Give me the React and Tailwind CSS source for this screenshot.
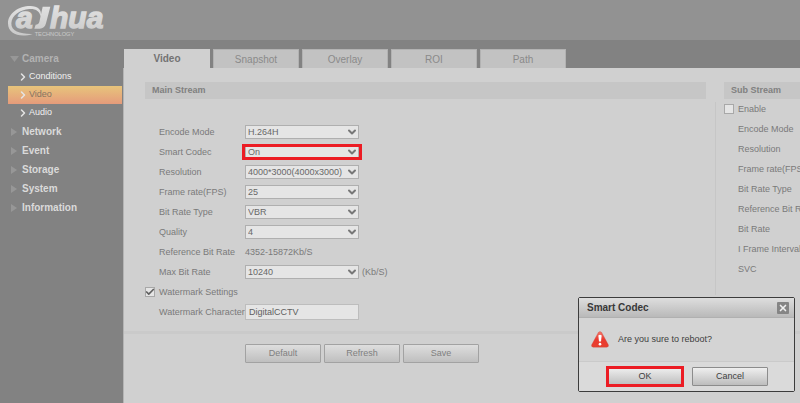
import React, { useState } from 'react';
import { Check, ChevronDown, ChevronRight, X } from 'lucide-react';

const menu = [
  { name: 'Camera', open: true, children: ['Conditions', 'Video', 'Audio'] },
  { name: 'Network' },
  { name: 'Event' },
  { name: 'Storage' },
  { name: 'System' },
  { name: 'Information' },
];

const tabs = ['Video', 'Snapshot', 'Overlay', 'ROI', 'Path'];

const mainFields = [
  { id: 'encode', label: 'Encode Mode', options: ['H.264H', 'H.264', 'H.265'] },
  { id: 'codec', label: 'Smart Codec', options: ['On', 'Off'], marked: true },
  { id: 'resolution', label: 'Resolution', options: ['4000*3000(4000x3000)'] },
  { id: 'fps', label: 'Frame rate(FPS)', options: ['25', '20', '15'] },
  { id: 'bitrate-type', label: 'Bit Rate Type', options: ['VBR', 'CBR'] },
  { id: 'quality', label: 'Quality', options: ['4', '5', '6'] },
  { id: 'reference', label: 'Reference Bit Rate', text: '4352-15872Kb/S' },
  { id: 'max', label: 'Max Bit Rate', options: ['10240', '8192'], unit: '(Kb/S)' },
];

const subFields = [
  'Encode Mode',
  'Resolution',
  'Frame rate(FPS)',
  'Bit Rate Type',
  'Reference Bit Rate',
  'Bit Rate',
  'I Frame Interval',
  'SVC',
];

const Logo = () => (
  <svg viewBox="0 0 330 120" className="h-10 w-[110px]" role="img" aria-label="alhua technology">
    <defs>
      <linearGradient id="silver" x1="0" y1="15" x2="0" y2="110" gradientUnits="userSpaceOnUse">
        <stop offset="0" stopColor="#e2e2e2" />
        <stop offset="1" stopColor="#c8c8c8" />
      </linearGradient>
    </defs>
    <g fill="url(#silver)" fontFamily="Liberation Sans, Arial, sans-serif">
      {/* ring round the first letter */}
      <path d="M98 102 C62 114 24 104 24 70 C24 40 56 18 91 18 C113 18 127 29 122 50 C119 34 108 26 88 27 C60 29 35 46 34 70 C33 94 62 103 98 102 Z" />
      {/* tall stroke that hooks under the ring */}
      <path d="M128 20 H151 L138 70 C135 81 129 86 119 86 H103 L107 74 C113 74 116 72 118 66 Z" />
      <g fontSize="90" fontWeight="700" fontStyle="italic" stroke="url(#silver)" strokeWidth="4">
        <text x="48" y="84">a</text>
        <text x="150" y="84">hua</text>
      </g>
      <text x="104" y="107" fontSize="17">TECHNOLOGY</text>
    </g>
  </svg>
);

const SelectBox = ({ id, options, marked }) => (
  <span className="relative block w-[114px]">
    <select
      id={id}
      className="block h-[14px] w-full appearance-none border border-[#afafaf] bg-[#e5e5e5] pl-[2px] text-[9px] leading-[12px] text-[#686868]"
    >
      {options.map((option) => (
        <option key={option}>{option}</option>
      ))}
    </select>
    <ChevronDown className="pointer-events-none absolute top-px right-px h-3 w-3 text-[#777]" strokeWidth={4} />
    {marked && <span className="pointer-events-none absolute -inset-x-[3px] -inset-y-px border-[3px] border-[#ec1c24]" />}
  </span>
);

const CheckBox = ({ id, defaultChecked }) => (
  <span className="relative block h-[10px] w-[10px] shrink-0">
    <input
      id={id}
      type="checkbox"
      defaultChecked={defaultChecked}
      className="peer block h-full w-full appearance-none border border-[#a8a8a8] bg-[#e5e5e5]"
    />
    <Check className="pointer-events-none absolute inset-0 hidden h-[10px] w-[10px] text-[#606060] peer-checked:block" strokeWidth={4} />
  </span>
);

const SectionTitle = ({ children }) => (
  <h2 className="h-[17px] bg-[#c6c6c6] pl-[7px] text-[9px] leading-[17px] font-bold whitespace-nowrap text-[#808080]">
    {children}
  </h2>
);

const Sidebar = () => (
  <nav className="w-[123px] shrink-0 pt-[9px] pr-px pl-2">
    {menu.map((item) => (
      <div key={item.name}>
        <a href="#" className={`flex h-[19px] items-center pl-[2px] text-[10px] font-bold ${item.open ? 'text-[#b2b2b2]' : 'text-[#dadada]'}`}>
          <svg viewBox="0 0 12 12" className="h-3 w-3 text-[#979797]" fill="currentColor">
            {item.open ? <path d="M0 3 H9 L4.500 9 Z" /> : <path d="M1 2 L7 6 L1 10 Z" />}
          </svg>
          {item.name}
        </a>
        {item.children?.map((child) => (
          <a
            key={child}
            href="#"
            className={`flex h-[18px] items-center pl-[9px] text-[9px] ${
              child === 'Video' ? 'bg-linear-to-b from-[#e7c47b] to-[#e59b7b] text-[#857462]' : 'text-[#f0f0f0]'
            }`}
          >
            <ChevronRight className="h-3 w-3 text-[#e4e4e4]" strokeWidth={3} />
            {child}
          </a>
        ))}
      </div>
    ))}
  </nav>
);

const RebootDialog = ({ onClose }) => (
  <div
    role="dialog"
    aria-labelledby="dialog-title"
    className="absolute right-[5px] bottom-[11px] w-[217px] rounded-[2px] border border-[#3c3c3c] bg-[#d4d4d4] text-[9px] text-[#404040]"
  >
    <div className="flex h-[20px] items-center justify-between border-b border-[#b0b0b0] bg-linear-to-b from-[#dedede] to-[#b9b9b9] pr-[5px] pl-2">
      <h3 id="dialog-title" className="text-[10px] font-bold text-[#383838]">Smart Codec</h3>
      <button type="button" aria-label="Close" onClick={onClose} className="flex h-3 w-3 items-center justify-center rounded-[1px] bg-[#858585] text-[#f0f0f0]">
        <X className="h-[10px] w-[10px]" strokeWidth={4} />
      </button>
    </div>
    <div className="flex h-[43px] items-center gap-[9px] pl-3">
      <svg viewBox="0 0 54 50" className="h-[17px] w-[18px]">
        <defs>
          <linearGradient id="alert" x1="0" y1="0" x2="0" y2="1">
            <stop offset="0" stopColor="#f47a6c" />
            <stop offset="0.500" stopColor="#ea3a30" />
            <stop offset="1" stopColor="#e8402f" />
          </linearGradient>
        </defs>
        <path d="M22 4 Q27 -2 32 4 L52 41 Q54 48 47 48 H7 Q0 48 2 41 Z" fill="url(#alert)" stroke="#c9453c" />
        <path d="M22 13 Q27 9 32 13 L30 31 H24 Z" fill="#fff" />
        <circle cx="27" cy="39" r="4" fill="#fff" />
      </svg>
      <p>Are you sure to reboot?</p>
    </div>
    <div className="flex h-[30px] items-center justify-end gap-[9px] border-t border-[#cacaca] bg-[#dadada] pr-[26px]">
      <span className="relative">
        <button type="button" onClick={onClose} className="block h-[19px] w-[76px] rounded-[1px] border border-[#8c8c8c] bg-linear-to-b from-[#efefef] to-[#bdbdbd]">
          OK
        </button>
        <span className="pointer-events-none absolute -inset-px border-[3px] border-[#ec1c24]" />
      </span>
      <button type="button" onClick={onClose} className="h-[19px] w-[76px] rounded-[1px] border border-[#8c8c8c] bg-linear-to-b from-[#efefef] to-[#bdbdbd]">
        Cancel
      </button>
    </div>
  </div>
);

const App = () => {
  const [activeTab, setActiveTab] = useState('Video');
  const [showDialog, setShowDialog] = useState(true);

  return (
    <div className="relative flex min-h-screen flex-col overflow-hidden bg-[#828282] font-['Liberation_Sans',Arial,sans-serif]">
      <header className="h-10 bg-[#929292]">
        <Logo />
      </header>

      <div className="flex flex-1">
        <Sidebar />

        <main className="flex min-w-0 flex-1 flex-col pt-[9px]">
          <div role="tablist" className="flex gap-[3px] pl-px">
            {tabs.map((tab) => (
              <button
                key={tab}
                type="button"
                role="tab"
                aria-selected={tab === activeTab}
                onClick={() => setActiveTab(tab)}
                className={`h-[19px] w-[86px] text-[10px] ${
                  tab === activeTab ? 'bg-[#d0d0d0] font-bold text-[#737373]' : 'border border-b-0 border-[#b2b2b2] bg-[#c2c2c2] text-[#8a8a8a]'
                }`}
              >
                {tab}
              </button>
            ))}
          </div>

          <div className="flex-1 border-l border-[#b4b4b4] bg-[#d0d0d0] pt-[14px] text-[9px] text-[#7a7a7a]">
            <div className="flex pl-[21px]">
              <section className="min-w-0 flex-1">
                <SectionTitle>Main Stream</SectionTitle>
                <div className="pt-[23px] pb-[9px]">
                  {mainFields.map((field) => (
                    <div key={field.id} className="flex h-5 items-center pl-[14px]">
                      <label htmlFor={field.options && field.id} className="w-[86px] pt-[2px] whitespace-nowrap">{field.label}</label>
                      {field.options ? <SelectBox {...field} /> : <span className="pt-[2px]">{field.text}</span>}
                      {field.unit && <span className="pt-[2px] pl-[3px]">{field.unit}</span>}
                    </div>
                  ))}
                  <div className="flex h-5 items-center gap-1">
                    <CheckBox id="watermark" defaultChecked />
                    <label htmlFor="watermark" className="pt-[2px]">Watermark Settings</label>
                  </div>
                  <div className="flex h-5 items-center pl-[14px]">
                    <label htmlFor="character" className="w-[86px] pt-[2px] whitespace-nowrap">Watermark Character</label>
                    <input
                      id="character"
                      type="text"
                      defaultValue="DigitalCCTV"
                      className="h-4 w-[114px] border border-[#bdbdbd] bg-[#e5e5e5] px-[3px] text-[9px] text-[#606060]"
                    />
                  </div>
                </div>
              </section>

              <div className="flex w-[18px] shrink-0 justify-center pt-5 pb-9">
                <div className="w-px bg-[#c6c6c6]" />
              </div>

              <section className="w-[76px] shrink-0 overflow-hidden">
                <SectionTitle>Sub Stream</SectionTitle>
                <div className="flex h-5 items-center gap-1">
                  <CheckBox id="sub-enable" />
                  <label htmlFor="sub-enable" className="pt-[2px]">Enable</label>
                </div>
                {subFields.map((field) => (
                  <p key={field} className="h-5 pl-[14px] leading-5 whitespace-nowrap">{field}</p>
                ))}
              </section>
            </div>

            <div className="h-[3px] bg-[#cacaca]" />

            <div className="flex gap-[3px] pt-[10px] pl-[121px]">
              {['Default', 'Refresh', 'Save'].map((name) => (
                <button
                  key={name}
                  type="button"
                  className="h-[19px] w-[76px] rounded-[1px] border border-[#a2a2a2] bg-linear-to-b from-[#dedede] to-[#bfbfbf] text-[#808080]"
                >
                  {name}
                </button>
              ))}
            </div>
          </div>
        </main>
      </div>

      {showDialog && <RebootDialog onClose={() => setShowDialog(false)} />}
    </div>
  );
};

export default App;
